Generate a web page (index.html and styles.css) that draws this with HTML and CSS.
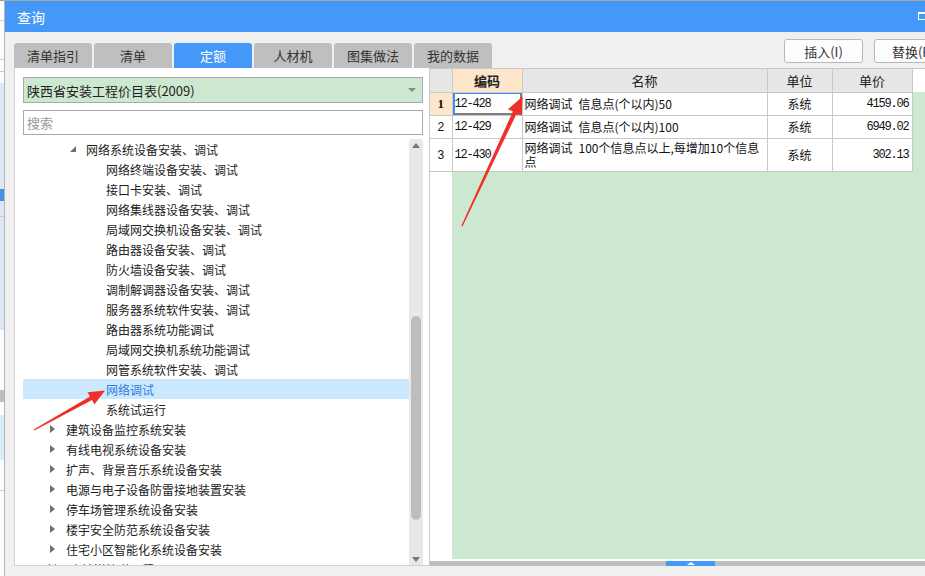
FILE: index.html
```html
<!DOCTYPE html>
<html lang="zh-CN">
<head>
<meta charset="utf-8">
<title>查询</title>
<link rel="stylesheet" href="styles.css">
</head>
<body>
<div class="screen">
  <div class="backdrop"></div>
  <div class="dialog">
    <div class="titlebar">
      <span class="title">查询</span>
      <span class="max-icon"></span>
    </div>
    <div class="dialog-body">
      <div class="toprow">
        <div class="tabs">
          <div class="tab">清单指引</div>
          <div class="tab">清单</div>
          <div class="tab active">定额</div>
          <div class="tab">人材机</div>
          <div class="tab">图集做法</div>
          <div class="tab">我的数据</div>
        </div>
        <div class="actions">
          <button class="btn">插入(I)</button>
          <button class="btn">替换(R)</button>
        </div>
      </div>
      <div class="main">
        <div class="left">
          <div class="select"><span>陕西省安装工程价目表(2009)</span><span class="caret"></span></div>
          <div class="search">搜索</div>
          <div class="tree">
            <div class="tree-list">
              <div class="node l2"><span class="tog open"></span>网络系统设备安装、调试</div>
              <div class="node l3"><span class="tog"></span>网络终端设备安装、调试</div>
              <div class="node l3"><span class="tog"></span>接口卡安装、调试</div>
              <div class="node l3"><span class="tog"></span>网络集线器设备安装、调试</div>
              <div class="node l3"><span class="tog"></span>局域网交换机设备安装、调试</div>
              <div class="node l3"><span class="tog"></span>路由器设备安装、调试</div>
              <div class="node l3"><span class="tog"></span>防火墙设备安装、调试</div>
              <div class="node l3"><span class="tog"></span>调制解调器设备安装、调试</div>
              <div class="node l3"><span class="tog"></span>服务器系统软件安装、调试</div>
              <div class="node l3"><span class="tog"></span>路由器系统功能调试</div>
              <div class="node l3"><span class="tog"></span>局域网交换机系统功能调试</div>
              <div class="node l3"><span class="tog"></span>网管系统软件安装、调试</div>
              <div class="node l3 selected"><span class="tog"></span>网络调试</div>
              <div class="node l3"><span class="tog"></span>系统试运行</div>
              <div class="node l1"><span class="tog closed"></span>建筑设备监控系统安装</div>
              <div class="node l1"><span class="tog closed"></span>有线电视系统设备安装</div>
              <div class="node l1"><span class="tog closed"></span>扩声、背景音乐系统设备安装</div>
              <div class="node l1"><span class="tog closed"></span>电源与电子设备防雷接地装置安装</div>
              <div class="node l1"><span class="tog closed"></span>停车场管理系统设备安装</div>
              <div class="node l1"><span class="tog closed"></span>楼宇安全防范系统设备安装</div>
              <div class="node l1"><span class="tog closed"></span>住宅小区智能化系统设备安装</div>
              <div class="node l0"><span class="tog"></span>长距离输送管道工程</div>
            </div>
            <div class="vscroll">
              <div class="varrow"><span class="tri-up"></span></div>
              <div class="vthumb"></div>
              <div class="varrow bottom"><span class="tri-down"></span></div>
            </div>
          </div>
        </div>
        <div class="grid">
          <div class="grid-area">
            <table class="table">
              <colgroup>
                <col class="c-num"><col class="c-code"><col class="c-name"><col class="c-unit"><col class="c-price">
              </colgroup>
              <thead>
                <tr>
                  <th></th>
                  <th class="th-code">编码</th>
                  <th>名称</th>
                  <th>单位</th>
                  <th>单价</th>
                </tr>
              </thead>
              <tbody>
                <tr>
                  <td class="num cur">1</td>
                  <td class="code focus">12-428</td>
                  <td class="name">网络调试&ensp;信息点(个以内)50</td>
                  <td class="unit">系统</td>
                  <td class="price">4159.06</td>
                </tr>
                <tr>
                  <td class="num">2</td>
                  <td class="code">12-429</td>
                  <td class="name">网络调试&ensp;信息点(个以内)100</td>
                  <td class="unit">系统</td>
                  <td class="price">6949.02</td>
                </tr>
                <tr class="tall">
                  <td class="num">3</td>
                  <td class="code">12-430</td>
                  <td class="name">网络调试&ensp;100个信息点以上,每增加10个信息<br>点</td>
                  <td class="unit">系统</td>
                  <td class="price">302.13</td>
                </tr>
              </tbody>
            </table>
          </div>
          <div class="hgap"></div>
          <div class="hscroll"><span class="hthumb"><span class="tri-small"></span></span></div>
        </div>
      </div>
    </div>
  </div>
</div>
<svg class="arrows" width="925" height="576" viewBox="0 0 925 576" aria-hidden="true">
  <polygon fill="#ef2f28" points="462.6,226.3 516.8,113.3 521.6,115.6 522.5,96.5 508.0,109.2 512.8,111.5 461.4,225.7"/>
  <polygon fill="#ef2f28" points="34.3,430.6 92.0,400.0 94.4,404.4 105,390.5 87.6,392.2 90.0,396.6 33.7,429.4"/>
</svg>
</body>
</html>
```

FILE: styles.css
```css
* { box-sizing: border-box; }

html, body {
  margin: 0;
  padding: 0;
  cursor: none;
}

body {
  width: 925px;
  height: 576px;
  overflow: hidden;
  position: relative;
  background: #ffffff;
  font-family: "Noto Sans CJK SC", "Noto Sans", sans-serif;
  color: #222;
}

.screen {
  display: flex;
  width: 925px;
  height: 576px;
  cursor: none;
}

.backdrop {
  width: 4px;
  flex-shrink: 0;
  background: linear-gradient(to bottom,
    #9a9a9a 0 1px, #fff 1px 20px, #cfcfcf 20px 21px, #fff 21px 59px, #cfcfcf 59px 60px,
    #fff 60px 71px, #f5c08a 71px 72px, #fff 72px 83px,
    #dde7f5 83px 189px, #4a90e2 189px 201px, #dde7f5 201px 216px, #f5c08a 216px 217px,
    #dde7f5 217px 330px, #fff 330px 390px, #bdbdbd 390px 402px, #fff 402px 415px,
    #d8eef6 415px 460px, #fff 460px 490px, #cfcfcf 490px 491px, #fff 491px 576px);
}

.dialog {
  flex: 1;
  display: flex;
  flex-direction: column;
  min-width: 0;
  border-left: 1px solid #b4b4b4;
  border-top: 1px solid #a8a8a8;
  background: #f0f0f0;
}

.titlebar {
  height: 31px;
  flex-shrink: 0;
  display: flex;
  align-items: center;
  padding-left: 12px;
  background: #4499f8;
  color: #fff;
  font-size: 14px;
}

.max-icon {
  margin-left: auto;
  margin-right: -3px;
  margin-top: -1px;
  width: 10px;
  height: 8px;
  border: 1px solid #fff;
  border-top-width: 2px;
}

.dialog-body {
  flex: 1;
  display: flex;
  flex-direction: column;
  padding: 7px 0 10px 9px;
  overflow: hidden;
  min-height: 0;
}

.toprow {
  height: 29px;
  flex-shrink: 0;
  display: flex;
  align-items: flex-start;
}

.tabs {
  display: flex;
  gap: 2px;
  align-self: flex-end;
  flex-shrink: 0;
}

.tab {
  width: 78px;
  height: 25px;
  display: flex;
  align-items: center;
  justify-content: center;
  background: #bfbfbf;
  color: #333;
  font-size: 13px;
  border-radius: 3px 3px 0 0;
  cursor: none;
}

.tab.active {
  background: #4499f8;
  color: #fff;
}

.actions {
  display: flex;
  gap: 11px;
  margin-left: 292px;
  flex-shrink: 0;
}

.btn {
  width: 79px;
  height: 24px;
  flex-shrink: 0;
  padding: 0;
  border: 1px solid #b8b8b8;
  border-radius: 3px;
  background: #fdfdfd;
  color: #333;
  font-family: "Noto Sans CJK SC", "Noto Sans", sans-serif;
  font-size: 13px;
}

.main {
  flex: 1;
  display: flex;
  min-height: 0;
}

.left {
  width: 415px;
  flex-shrink: 0;
  display: flex;
  flex-direction: column;
  background: #fff;
  border-left: 1px solid #d2d2d2;
  border-bottom: 1px solid #d2d2d2;
  padding: 9px 6px 0 8px;
}

.select {
  height: 26px;
  flex-shrink: 0;
  display: flex;
  align-items: center;
  padding-left: 3px;
  border: 1px solid #a9a9a9;
  background: #cde8d0;
  font-size: 13px;
  color: #222;
}

.caret {
  margin-left: auto;
  margin-right: 6px;
  width: 0;
  height: 0;
  border-left: 4px solid transparent;
  border-right: 4px solid transparent;
  border-top: 4px solid #8a8a8a;
}

.search {
  height: 25px;
  flex-shrink: 0;
  margin-top: 7px;
  display: flex;
  align-items: center;
  padding-left: 3px;
  border: 1px solid #a9a9a9;
  background: #fff;
  font-size: 13px;
  color: #9a9a9a;
}

.tree {
  flex: 1;
  min-height: 0;
  margin-top: 4px;
  display: flex;
}

.tree-list {
  flex: 1;
  min-width: 0;
  overflow: hidden;
}

.node {
  height: 20px;
  display: flex;
  align-items: center;
  font-size: 12px;
  color: #222;
  white-space: nowrap;
}

.node.l0 { padding-left: 7px; }
.node.l1 { padding-left: 27px; }
.node.l2 { padding-left: 47px; }
.node.l3 { padding-left: 67px; }

.node.selected {
  background: #cce8ff;
  color: #2f80d8;
}

.tog {
  width: 16px;
  flex-shrink: 0;
  height: 8px;
}

.tog.open::before {
  content: "";
  display: block;
  width: 0;
  height: 0;
  margin-top: 1px;
  border-left: 6px solid transparent;
  border-bottom: 6px solid #707070;
}

.tog.closed::before {
  content: "";
  display: block;
  width: 0;
  height: 0;
  border-top: 4px solid transparent;
  border-bottom: 4px solid transparent;
  border-left: 5px solid #707070;
}

.vscroll {
  width: 14px;
  flex-shrink: 0;
  display: flex;
  flex-direction: column;
  align-items: center;
  background: #e8e8e8;
}

.varrow {
  height: 12px;
  width: 14px;
  display: flex;
  align-items: center;
  justify-content: center;
}

.varrow.bottom {
  margin-top: auto;
}

.tri-up {
  width: 0;
  height: 0;
  border-left: 4px solid transparent;
  border-right: 4px solid transparent;
  border-bottom: 5px solid #777;
}

.tri-down {
  width: 0;
  height: 0;
  border-left: 4px solid transparent;
  border-right: 4px solid transparent;
  border-top: 5px solid #777;
}

.vthumb {
  width: 10px;
  height: 204px;
  margin-top: 165px;
  border-radius: 5px;
  background: #bdbdbd;
}

.grid {
  flex: 1;
  min-width: 0;
  display: flex;
  flex-direction: column;
  background: #fff;
  border-left: 1px solid #c8c8c8;
  border-top: 1px solid #c8c8c8;
}

.grid-area {
  flex: 1;
  min-height: 0;
  background:
    linear-gradient(#fff, #fff) top left / 100% 23px no-repeat,
    linear-gradient(to right, #fff 22px, #cde8d0 22px);
}

.table {
  border-collapse: collapse;
  table-layout: fixed;
  width: 482px;
  background: #fff;
}

.c-num { width: 22px; }
.c-code { width: 70px; }
.c-name { width: 245px; }
.c-unit { width: 65px; }
.c-price { width: 80px; }

.table th,
.table td {
  border: 1px solid #c8c8c8;
  padding: 0;
  height: 23px;
  vertical-align: middle;
}

.table tr:first-child th {
  border-top: none;
}

.table th:first-child,
.table td:first-child {
  border-left: none;
}

.table th {
  background: #e6e6e6;
  font-weight: normal;
  font-size: 13px;
  color: #222;
  text-align: center;
}

.table th.th-code {
  background: #fde6c9;
  font-weight: bold;
}

.table td {
  font-size: 12px;
  color: #111;
  line-height: 14px;
}

.table tr.tall td {
  height: 33px;
}

.num {
  text-align: center;
  font-family: "Liberation Sans", sans-serif;
  color: #333;
}

.num.cur {
  background: #fde6c9;
  font-weight: bold;
  font-family: "Liberation Serif", serif;
  font-size: 13px;
}

.code {
  padding-left: 2px !important;
  font-family: "Liberation Mono", monospace;
  letter-spacing: -1.2px;
}

.code.focus {
  box-shadow: inset 2px 1px 0 #3d8ef0, inset -2px -2px 0 #7e7e7e;
}

.name {
  padding-left: 2px !important;
  font-family: "Noto Sans CJK SC", sans-serif;
}

.unit {
  text-align: center;
}

.price {
  text-align: right;
  padding-right: 3px !important;
  font-family: "Liberation Mono", monospace;
  letter-spacing: -1.2px;
}

.hgap {
  height: 2px;
  flex-shrink: 0;
  background: #fff;
}

.hscroll {
  height: 5px;
  flex-shrink: 0;
  display: flex;
  background: #bdbdbd;
}

.hthumb {
  margin-left: 236px;
  width: 49px;
  height: 5px;
  display: flex;
  align-items: center;
  justify-content: center;
  background: #4499f8;
}

.tri-small {
  width: 0;
  height: 0;
  border-left: 4px solid transparent;
  border-right: 4px solid transparent;
  border-bottom: 3px solid #fff;
}

.arrows {
  position: absolute;
  left: 0;
  top: 0;
  pointer-events: none;
}
```
